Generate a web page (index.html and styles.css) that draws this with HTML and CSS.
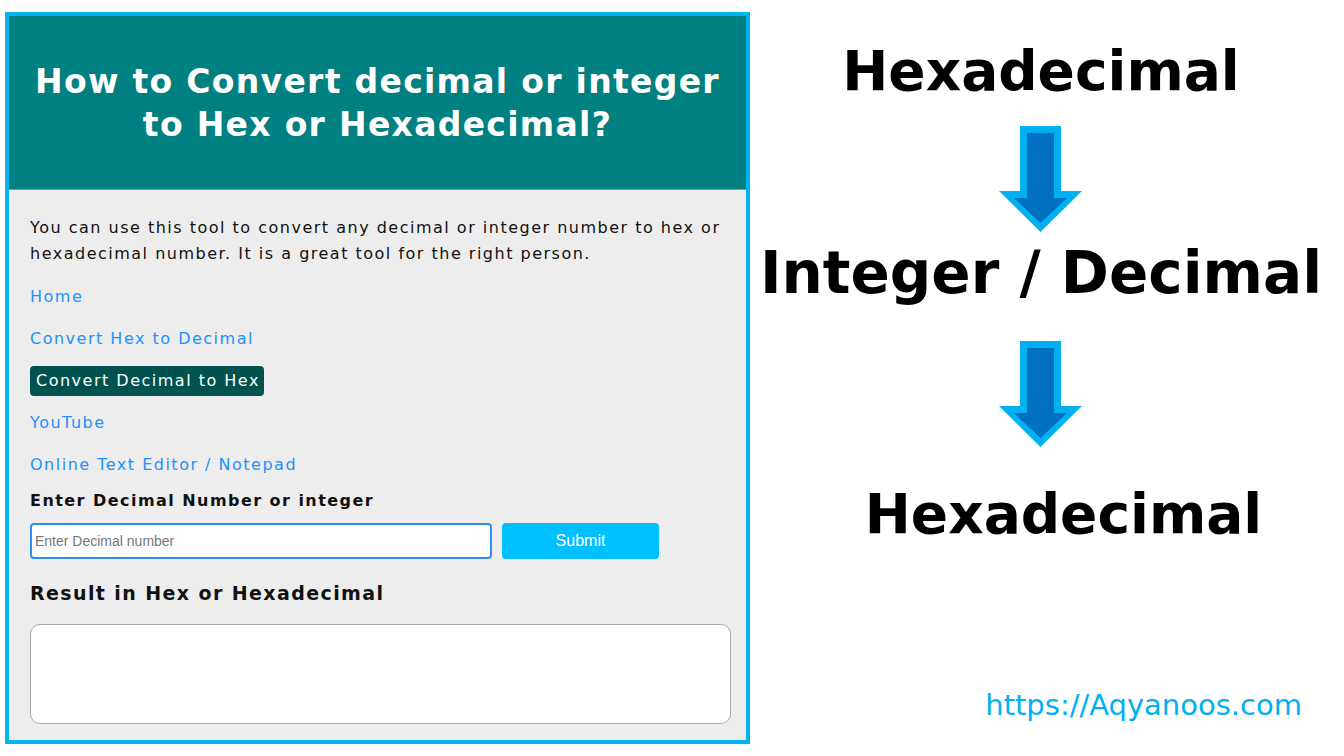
FILE: index.html
```html
<!DOCTYPE html>
<html lang="en">
<head>
<meta charset="utf-8">
<title>Convert Decimal to Hex</title>
<link rel="stylesheet" href="styles.css">
</head>
<body>
<div class="page">
  <section class="panel">
    <header class="hero">
      <h1 class="hero-title">How to Convert decimal or integer<br>to Hex or Hexadecimal?</h1>
    </header>
    <div class="content">
      <p class="intro">You can use this tool to convert any decimal or integer number to hex or hexadecimal number. It is a great tool for the right person.</p>
      <nav class="links">
        <a class="link" href="#">Home</a>
        <a class="link" href="#">Convert Hex to Decimal</a>
        <a class="link active" href="#">Convert Decimal to Hex</a>
        <a class="link" href="#">YouTube</a>
        <a class="link" href="#">Online Text Editor / Notepad</a>
      </nav>
      <h3 class="label">Enter Decimal Number or integer</h3>
      <div class="form-row">
        <input class="num-input" type="text" placeholder="Enter Decimal number">
        <button class="submit" type="button">Submit</button>
      </div>
      <h2 class="result-title">Result in Hex or Hexadecimal</h2>
      <textarea class="result"></textarea>
    </div>
  </section>
  <aside class="flow">
    <div class="big big-top">Hexadecimal</div>
    <svg class="arrow arrow-1" width="84" height="107" viewBox="0 0 84 107">
      <polygon points="21,0 62,0 62,65 83,65 41.5,106 0,65 21,65" fill="#00b0f0"/>
      <polygon points="28,7 55,7 55,72 68,72 41.5,97 15,72 28,72" fill="#0070c0"/>
    </svg>
    <div class="big big-mid">Integer / Decimal</div>
    <svg class="arrow arrow-2" width="84" height="107" viewBox="0 0 84 107">
      <polygon points="21,0 62,0 62,65 83,65 41.5,106 0,65 21,65" fill="#00b0f0"/>
      <polygon points="28,7 55,7 55,72 68,72 41.5,97 15,72 28,72" fill="#0070c0"/>
    </svg>
    <div class="big big-bottom">Hexadecimal</div>
    <div class="url">https://Aqyanoos.com</div>
  </aside>
</div>
</body>
</html>
```

FILE: styles.css
```css
* { box-sizing: border-box; }
html, body { margin: 0; padding: 0; background: #ffffff; }
body { font-family: "DejaVu Sans", Verdana, sans-serif; width: 1344px; height: 756px; overflow: hidden; }

.page { display: flex; align-items: flex-start; }

.panel {
  margin: 12px 0 0 5px;
  width: 745px;
  height: 732px;
  border: 4px solid #00b4f0;
  background: #ededed;
  display: flex;
  flex-direction: column;
}

.hero {
  height: 174px;
  background: #008080;
  border-bottom: 1px solid #6aa9a6;
  display: flex;
  align-items: center;
  justify-content: center;
}
.hero-title {
  margin: 0;
  color: #ffffff;
  font-family: "DejaVu Sans", Verdana, sans-serif;
  font-weight: bold;
  font-size: 33px;
  line-height: 43px;
  letter-spacing: 1.3px;
  text-align: center;
}

.content {
  padding: 25px 15px 0 21px;
  display: flex;
  flex-direction: column;
  align-items: flex-start;
}

.intro {
  margin: 0;
  font-size: 16px;
  line-height: 26px;
  letter-spacing: 1.5px;
  color: #111111;
}

.links {
  margin-top: 15px;
  display: flex;
  flex-direction: column;
  align-items: flex-start;
  gap: 12px;
}
.link {
  display: block;
  font-size: 16px;
  line-height: 30px;
  letter-spacing: 1.5px;
  color: #1e90ff;
  text-decoration: none;
}
.link.active {
  background: #00524f;
  color: #ffffff;
  padding: 0 4px 0 6px;
  border-radius: 4px;
}

.label {
  margin: 10px 0 0;
  font-size: 16px;
  line-height: 22px;
  letter-spacing: 1.45px;
  font-weight: bold;
  color: #111111;
}

.form-row {
  margin-top: 11px;
  display: flex;
  align-items: center;
  gap: 10px;
}
.num-input {
  width: 462px;
  height: 36px;
  border: 2px solid #2a8ff0;
  border-radius: 4px;
  background: #ffffff;
  padding: 0 3px;
  font-family: "Liberation Sans", Arial, sans-serif;
  font-size: 14px;
  outline: none;
}
.num-input::placeholder { color: #777777; }
.submit {
  width: 157px;
  height: 36px;
  margin-top: -1px;
  border: none;
  border-radius: 4px;
  background: #00bfff;
  color: #ffffff;
  font-family: "Liberation Sans", Arial, sans-serif;
  font-size: 16px;
}

.result-title {
  margin: 20px 0 0;
  font-size: 19px;
  line-height: 28px;
  letter-spacing: 1.4px;
  font-weight: bold;
  color: #111111;
}

.result {
  margin-top: 17px;
  width: 701px;
  height: 100px;
  border: 1px solid #aaaaaa;
  border-radius: 10px;
  background: #ffffff;
  resize: none;
}

.flow {
  flex: 1;
  display: flex;
  flex-direction: column;
  align-items: center;
  padding-right: 12px;
  font-family: "DejaVu Sans", Verdana, sans-serif;
  font-weight: bold;
  color: #000000;
}
.big { white-space: nowrap; }
.big-top { margin-top: 41px; font-size: 55px; line-height: 60px; }
.arrow { display: block; }
.arrow-1 { margin-top: 25px; }
.big-mid { margin-top: 8px; font-size: 58px; line-height: 64px; }
.arrow-2 { margin-top: 36px; }
.big-bottom { margin-top: 36px; margin-left: 45px; font-size: 55px; line-height: 60px; }
.url {
  align-self: flex-end;
  margin-top: 143px;
  margin-right: 30px;
  font-size: 29px;
  line-height: 36px;
  font-weight: normal;
  color: #00b0f0;
}
```
